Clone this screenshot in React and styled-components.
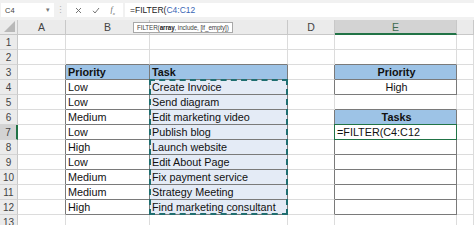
import React from "react";
import styled, {createGlobalStyle} from "styled-components";

const GlobalStyle = createGlobalStyle`
  html, body {
    margin: 0;
    padding: 0;
    background: #ffffff;
    overflow: hidden;
  }
  body {
    font-family: "Liberation Sans", Arial, sans-serif;
  }
`

const COLS = ["A", "B", "C", "D", "E", "F"];
const GRID = "#dcdcdc";
const DARK = "#7a7a7a";
const GREEN = "#217346";

const tasks = [
    ["Low", "Create Invoice"],
    ["Low", "Send diagram"],
    ["Medium", "Edit marketing video"],
    ["Low", "Publish blog"],
    ["High", "Launch website"],
    ["Low", "Edit About Page"],
    ["Medium", "Fix payment service"],
    ["Medium", "Strategy Meeting"],
    ["High", "Find marketing consultant"],
];

// cell contents keyed by "B3" etc
const cells = {
    B3: {text: "Priority", head: true},
    C3: {text: "Task", head: true},
    E3: {text: "Priority", head: true, center: true},
    E4: {text: "High", center: true},
    E6: {text: "Tasks", head: true, center: true},
    E7: {text: "=FILTER(C4:C12"},
};
tasks.forEach(([p, t], i) => {
    cells["B" + (i + 4)] = {text: p};
    cells["C" + (i + 4)] = {text: t, picked: true};
});

function inTable(col, row) {
    if ((col === "B" || col === "C") && row >= 3 && row <= 12) return true;
    if (col === "E" && (row === 3 || row === 4)) return true;
    if (col === "E" && row >= 6 && row <= 12) return true;
    return false;
}

function nextCol(col) {
    return COLS[COLS.indexOf(col) + 1];
}

export default function App() {
    const rows = Array.from({length: 13}, (_, i) => i + 1);

    return (
        <>
            <GlobalStyle/>
            <Page>
                <FormulaBar>
                    <NameBox>
                        <span>C4</span>
                        <Caret>▾</Caret>
                    </NameBox>
                    <Dots>⋮</Dots>
                    <FxBox>
                        <FxIcon>
                            <svg width="7" height="7" viewBox="0 0 7 7">
                                <path d="M1 1 L6 6 M6 1 L1 6" stroke="#666" strokeWidth="0.9"/>
                            </svg>
                        </FxIcon>
                        <FxIcon>
                            <svg width="8" height="7" viewBox="0 0 8 7">
                                <path d="M1 3.8 L3 6 L7 1" stroke="#666" strokeWidth="0.9" fill="none"/>
                            </svg>
                        </FxIcon>
                        <FxText>f<sub>x</sub></FxText>
                    </FxBox>
                    <FormulaInput>
                        =FILTER(<Ref>C4:C12</Ref>
                    </FormulaInput>
                </FormulaBar>

                <Sheet>
                    <Corner>
                        <svg width="11" height="11" viewBox="0 0 11 11">
                            <path d="M11 0 L11 11 L0 11 Z" fill="#b8b8b8"/>
                        </svg>
                    </Corner>
                    {COLS.map((c, ci) => (
                        <ColHeader key={c} $gc={ci + 2} $active={c === "E"}>{c === "F" ? "" : c}</ColHeader>
                    ))}

                    {rows.map(r => (
                        <React.Fragment key={r}>
                            <RowHeader $gr={r + 1} $active={r === 7}>{r}</RowHeader>
                            {COLS.map((c, ci) => {
                                const cell = cells[c + r] || {};
                                const right = inTable(c, r) || (nextCol(c) && inTable(nextCol(c), r));
                                const bottom = inTable(c, r) || inTable(c, r + 1);
                                return (
                                    <Cell key={c}
                                          $gc={ci + 2}
                                          $gr={r + 1}
                                          $head={cell.head}
                                          $picked={cell.picked}
                                          $center={cell.center}
                                          $right={right}
                                          $bottom={bottom}>
                                        {cell.text}
                                    </Cell>
                                );
                            })}
                        </React.Fragment>
                    ))}

                    <MarchingAnts $gc="4" $gr="5 / 14"/>
                    <ActiveCell $gc="6" $gr="8"/>
                </Sheet>

                <Tooltip>
                    FILTER(<b>array</b>, include, [if_empty])
                </Tooltip>
            </Page>
        </>
    )
}

const Page = styled.div`
  position: relative;
  width: 474px;
  height: 225px;
  overflow: hidden;
  background: #fff;
`

const FormulaBar = styled.div`
  display: flex;
  align-items: center;
  height: 20px;
  padding: 0 0 0 1px;
  background: #f1f1f1;
  box-sizing: border-box;
  font-size: 8px;
  color: #333;
`

const NameBox = styled.div`
  display: flex;
  align-items: center;
  justify-content: space-between;
  width: 53px;
  height: 14px;
  padding: 0 4px 0 4px;
  box-sizing: border-box;
  background: #fff;
  color: #444;
  font-size: 7.5px;
`

const Caret = styled.span`
  font-size: 7px;
  color: #777;
`

const Dots = styled.span`
  width: 13px;
  text-align: center;
  color: #b0b0b0;
  font-size: 9px;
`

const FxBox = styled.div`
  display: flex;
  align-items: center;
  justify-content: space-around;
  width: 56px;
  height: 14px;
  padding: 0 3px;
  box-sizing: border-box;
  background: #fff;
  margin-right: 2px;
`

const FxIcon = styled.span`
  display: flex;
  align-items: center;
`

const FxText = styled.span`
  font-family: "Liberation Serif", serif;
  font-style: italic;
  font-size: 8px;
  color: #666;

  & sub {
    font-size: 5px;
  }
`

const FormulaInput = styled.div`
  flex: 1;
  display: flex;
  align-items: center;
  height: 14px;
  padding-left: 5px;
  background: #fff;
  font-size: 8.5px;
  color: #222;
`

const Ref = styled.span`
  color: #3a66b5;
`

const Sheet = styled.div`
  display: grid;
  grid-template-columns: 18px 48px 84px 138px 47px 122px 1fr;
  grid-auto-rows: 15px;
`

const Corner = styled.div`
  grid-column: 1;
  grid-row: 1;
  display: flex;
  align-items: flex-end;
  justify-content: flex-end;
  padding: 0 2px 2px 0;
  background: #ebebeb;
  border-right: 1px solid #c8c8c8;
  border-bottom: 1px solid #c8c8c8;
  box-sizing: border-box;
`

const ColHeader = styled.div`
  grid-column: ${p => p.$gc};
  grid-row: 1;
  display: flex;
  align-items: center;
  justify-content: center;
  background: ${p => p.$active ? "#d3d3d3" : "#ebebeb"};
  color: ${p => p.$active ? "#3e6b52" : "#444"};
  border-right: 1px solid #c8c8c8;
  border-bottom: ${p => p.$active ? `2px solid ${GREEN}` : "1px solid #c8c8c8"};
  box-sizing: border-box;
  font-size: 10.5px;
`

const RowHeader = styled.div`
  grid-column: 1;
  grid-row: ${p => p.$gr};
  display: flex;
  align-items: center;
  justify-content: center;
  background: ${p => p.$active ? "#d3d3d3" : "#ebebeb"};
  color: #444;
  border-right: ${p => p.$active ? `2px solid ${GREEN}` : "1px solid #c8c8c8"};
  border-bottom: 1px solid #d4d4d4;
  box-sizing: border-box;
  font-size: 10px;
`

const Cell = styled.div`
  grid-column: ${p => p.$gc};
  grid-row: ${p => p.$gr};
  display: flex;
  align-items: center;
  justify-content: ${p => p.$center ? "center" : "flex-start"};
  padding-left: 2px;
  white-space: nowrap;
  box-sizing: border-box;
  font-size: 10.8px;
  color: #111;
  font-weight: ${p => p.$head ? 700 : 400};
  background: ${p => p.$head ? "#9dc3e6" : p.$picked ? "#e4ebf6" : "#fff"};
  border-right: 1px solid ${p => p.$right ? DARK : GRID};
  border-bottom: 1px solid ${p => p.$bottom ? DARK : GRID};
`

const MarchingAnts = styled.div`
  grid-column: ${p => p.$gc};
  grid-row: ${p => p.$gr};
  margin: -1px 0 0 -1px;
  border: 2px dashed #1f6e70;
  pointer-events: none;
`

const ActiveCell = styled.div`
  grid-column: ${p => p.$gc};
  grid-row: ${p => p.$gr};
  margin: -1px 0 0 -1px;
  border: 1.5px solid ${GREEN};
  pointer-events: none;
`

const Tooltip = styled.div`
  position: absolute;
  left: 133px;
  top: 22px;
  padding: 0 3px;
  background: #fff;
  border: 1px solid #a8a8a8;
  font-size: 6.3px;
  line-height: 9px;
  letter-spacing: -0.1px;
  color: #444;
  white-space: nowrap;

  & b {
    color: #222;
  }
`
